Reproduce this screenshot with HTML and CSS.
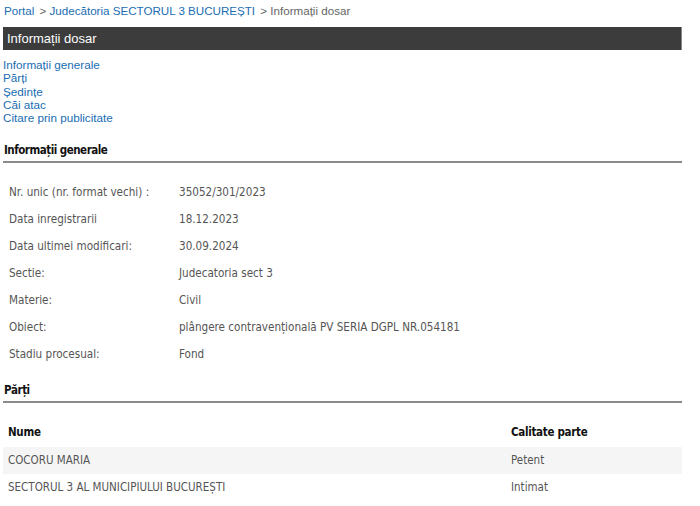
FILE: index.html
```html
<!DOCTYPE html>
<html lang="ro">
<head>
<meta charset="utf-8">
<title>Informații dosar</title>
<link rel="stylesheet" href="styles.css">
</head>
<body>
<div class="page">
  <div class="crumbs">
    <a class="crumb-link" href="#">Portal</a>
    <span class="sep">&gt;</span>
    <a class="crumb-link" href="#">Judecătoria SECTORUL 3 BUCUREȘTI</a>
    <span class="sep">&gt;</span>
    <span class="crumb-current">Informații dosar</span>
  </div>
  <div class="titlebar">Informații dosar</div>
  <nav class="toc">
    <a href="#">Informații generale</a>
    <a href="#">Părți</a>
    <a href="#">Ședințe</a>
    <a href="#">Căi atac</a>
    <a href="#">Citare prin publicitate</a>
  </nav>

  <h2 class="section-title first">Informații generale</h2>
  <div class="info">
    <div class="row"><span class="label">Nr. unic (nr. format vechi) :</span><span class="value">35052/301/2023</span></div>
    <div class="row"><span class="label">Data inregistrarii</span><span class="value">18.12.2023</span></div>
    <div class="row"><span class="label">Data ultimei modificari:</span><span class="value">30.09.2024</span></div>
    <div class="row"><span class="label">Sectie:</span><span class="value">Judecatoria sect 3</span></div>
    <div class="row"><span class="label">Materie:</span><span class="value">Civil</span></div>
    <div class="row"><span class="label">Obiect:</span><span class="value">plângere contravențională PV SERIA DGPL NR.054181</span></div>
    <div class="row"><span class="label">Stadiu procesual:</span><span class="value">Fond</span></div>
  </div>

  <h2 class="section-title">Părți</h2>
  <div class="parties">
    <div class="prow head"><span class="pname">Nume</span><span class="pcal">Calitate parte</span></div>
    <div class="prow odd"><span class="pname">COCORU MARIA</span><span class="pcal">Petent</span></div>
    <div class="prow"><span class="pname">SECTORUL 3 AL MUNICIPIULUI BUCUREȘTI</span><span class="pcal">Intimat</span></div>
  </div>
</div>
</body>
</html>
```

FILE: styles.css
```css
html, body {
  margin: 0;
  padding: 0;
  background: #ffffff;
}
.page {
  width: 679px;
  margin-left: 3px;
  font-family: "Liberation Sans", Arial, sans-serif;
}
.crumbs {
  font-size: 11.6px;
  line-height: 14px;
  padding: 4px 0 0 1px;
  height: 23px;
  box-sizing: border-box;
  color: #666666;
}
.crumb-link {
  color: #1a6db3;
  text-decoration: none;
}
.sep {
  color: #666666;
  margin-left: 2px;
}
.crumb-current {
  color: #666666;
}
.titlebar {
  background: #3c3c3c;
  border-right: 1px solid #888888;
  color: #ffffff;
  font-size: 13px;
  height: 23px;
  line-height: 23px;
  padding-left: 4px;
  margin-top: 4px;
}
.toc {
  display: flex;
  flex-direction: column;
  margin-top: 8px;
  font-size: 11.7px;
  line-height: 13.3px;
}
.toc a {
  color: #1a6db3;
  text-decoration: none;
}
.section-title {
  font-family: "DejaVu Sans Condensed", "DejaVu Sans", sans-serif;
  font-size: 11.5px;
  font-weight: bold;
  letter-spacing: -0.5px;
  color: #111111;
  margin: 0;
  padding: 0 0 4px 1px;
  line-height: 14px;
  border-bottom: 2px solid #8a8a8a;
}
.section-title.first {
  margin-top: 19px;
}
.info {
  padding: 16px 0 15px 0;
  font-family: "DejaVu Sans Condensed", "DejaVu Sans", sans-serif;
  font-size: 11.6px;
  color: #555555;
}
.row {
  display: flex;
  height: 27px;
  line-height: 27px;
}
.label {
  width: 170px;
  padding-left: 6px;
}
.value {
  color: #555555;
}
.parties {
  padding-top: 16px;
  font-family: "DejaVu Sans Condensed", "DejaVu Sans", sans-serif;
  font-size: 11.5px;
  color: #555555;
}
.prow {
  display: flex;
  height: 27px;
  line-height: 27px;
}
.prow.head {
  font-weight: bold;
  letter-spacing: -0.3px;
  color: #111111;
  height: 28px;
}
.prow.odd {
  background: #f5f5f5;
}
.pname {
  width: 503px;
  padding-left: 5px;
}
.pcal {
  flex: 1;
}
```
